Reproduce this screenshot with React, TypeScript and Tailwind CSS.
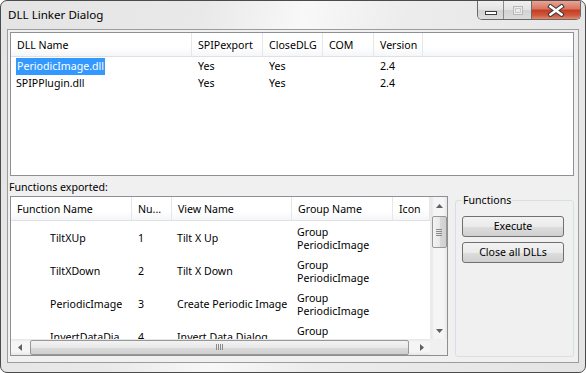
import React from "react";

const topCols = [
  { label: "DLL Name", w: 181 },
  { label: "SPIPexport", w: 71 },
  { label: "CloseDLG", w: 60 },
  { label: "COM", w: 51 },
  { label: "Version", w: 49 },
];

const topRows = [
  ["PeriodicImage.dll", "Yes", "Yes", "", "2.4"],
  ["SPIPPlugin.dll", "Yes", "Yes", "", "2.4"],
];

const lowCols = [
  { label: "Function Name", w: 121 },
  { label: "Nu...", w: 40 },
  { label: "View Name", w: 120 },
  { label: "Group Name", w: 101 },
  { label: "Icon", w: 37 },
];

const lowRows = [
  ["TiltXUp", "1", "Tilt X Up"],
  ["TiltXDown", "2", "Tilt X Down"],
  ["PeriodicImage", "3", "Create Periodic Image"],
  ["InvertDataDia", "4", "Invert Data Dialog"],
];

function Header({ cols }: { cols: { label: string; w: number }[] }) {
  return (
    <div className="flex h-[24px] shrink-0 border-b border-[#dfe0e3] bg-[linear-gradient(#ffffff,#ffffff_60%,#f5f6f8)]">
      {cols.map((c) => (
        <div
          key={c.label}
          style={{ width: c.w }}
          className="shrink-0 border-r border-[#e6e7e9] pl-[6px] pt-[2px] flex items-center whitespace-nowrap overflow-hidden"
        >
          {c.label}
        </div>
      ))}
      <div className="flex-1" />
    </div>
  );
}

function Arrow({ dir }: { dir: "up" | "down" | "left" | "right" }) {
  const pts =
    dir === "up"
      ? "0,4 3.5,0 7,4"
      : dir === "down"
      ? "0,0 3.5,4 7,0"
      : dir === "left"
      ? "4,0 0,3.5 4,7"
      : "0,0 4,3.5 0,7";
  const w = dir === "up" || dir === "down" ? 7 : 4;
  const h = dir === "up" || dir === "down" ? 4 : 7;
  return (
    <svg width={w} height={h} viewBox={`0 0 ${w} ${h}`}>
      <polygon points={pts} fill="#606060" />
    </svg>
  );
}

export default function App() {
  return (
    <div className="w-[586px] h-[373px] bg-white font-['Noto_Sans','Liberation_Sans',sans-serif] text-[10.6px] text-black leading-none">
      <div className="w-[586px] h-[373px] rounded-[7px] border border-[#4b4b4b] bg-[linear-gradient(105deg,#e4e4e4_0%,#e9e9e9_30%,#f8f8f8_45%,#ececec_60%,#e4e4e4_100%)] flex flex-col overflow-hidden">
        {/* title bar */}
        <div className="h-[28px] shrink-0 flex justify-between items-start">
          <div className="pl-[7px] pt-[8px] text-[11.6px] text-black">DLL Linker Dialog</div>
          <div className="flex mr-[4px] h-[19px] border border-t-0 border-[#6a6a6a] rounded-b-[5px] overflow-hidden">
            <div className="w-[26px] h-full border-r border-[#8a8a8a] bg-[linear-gradient(#f0f0f0,#e2e2e2_50%,#d2d2d2_51%,#dcdcdc)] flex items-center justify-center">
              <div className="mt-[6px] w-[12px] h-[4px] bg-white border border-[#3c3c3c]" />
            </div>
            <div className="w-[28px] h-full border-r border-[#6a6a6a] bg-[linear-gradient(#f0f0f0,#e2e2e2_50%,#d2d2d2_51%,#dcdcdc)] flex items-center justify-center">
              <div className="w-[10px] h-[9px] border border-[#b8b8b8] bg-[#ececec] flex items-start justify-center">
                <div className="mt-[1px] w-[6px] h-[5px] border border-[#c8c8c8]" />
              </div>
            </div>
            <div className="w-[48px] h-full bg-[linear-gradient(#e8a594,#d9735f_45%,#c43c22_50%,#cf5a3e_80%,#e18a6e)] flex items-center justify-center">
              <svg width="18" height="13" viewBox="0 0 18 13">
                <path d="M3.5 2.5 L14.5 10.5 M14.5 2.5 L3.5 10.5" stroke="#3a3a3a" strokeWidth="4.6" strokeLinecap="square" />
                <path d="M3.5 2.5 L14.5 10.5 M14.5 2.5 L3.5 10.5" stroke="#ffffff" strokeWidth="2.6" strokeLinecap="square" />
              </svg>
            </div>
          </div>
        </div>

        {/* client area */}
        <div className="mx-[6px] mb-[9px] flex-1 border border-[#9c9c9c] bg-[#f0f0f0] flex flex-col pl-[2px] pr-[4px] pt-[2px] pb-[5px]">
          {/* top list */}
          <div className="h-[144px] shrink-0 border border-[#8c9096] bg-white flex flex-col">
            <Header cols={topCols} />
            <div className="pt-[1px]">
              {topRows.map((r, i) => (
                <div key={i} className="flex h-[17px] items-center">
                  {r.map((cell, j) => (
                    <div
                      key={j}
                      style={{ width: topCols[j].w }}
                      className={`shrink-0 whitespace-nowrap ${j === 0 ? "pl-[5px]" : "pl-[6px]"}`}
                    >
                      {j === 0 && i === 0 ? (
                        <span className="inline-flex items-center h-[17px] px-[1px] bg-[#3399ff] text-white">{cell}</span>
                      ) : (
                        cell
                      )}
                    </div>
                  ))}
                </div>
              ))}
            </div>
          </div>

          {/* label */}
          <div className="h-[20px] shrink-0 flex items-center -ml-[1px] pt-[2px]">Functions exported:</div>

          {/* lower row */}
          <div className="flex-1 flex gap-[7px]">
            {/* lower list */}
            <div className="w-[438px] h-[160px] border border-[#8c9096] bg-white grid grid-cols-[1fr_17px] grid-rows-[1fr_16px]">
              <div className="flex flex-col overflow-hidden">
                <Header cols={lowCols} />
                <div className="pt-[1px] overflow-hidden flex-1">
                  {lowRows.map((r, i) => (
                    <div key={i} className="flex h-[33px] items-center">
                      <div style={{ width: 121 }} className="shrink-0 pl-[39px] whitespace-nowrap">{r[0]}</div>
                      <div style={{ width: 40 }} className="shrink-0 pl-[6px]">{r[1]}</div>
                      <div style={{ width: 120 }} className="shrink-0 pl-[5px] whitespace-nowrap">{r[2]}</div>
                      <div style={{ width: 101 }} className="shrink-0 pl-[5px] leading-[13px]">
                        <div>Group</div>
                        <div>PeriodicImage</div>
                      </div>
                    </div>
                  ))}
                </div>
              </div>
              {/* vertical scrollbar */}
              <div className="bg-[linear-gradient(90deg,#e6e6e6,#f5f5f5_20%,#f5f5f5_80%,#e6e6e6)] border-l border-[#ececec] flex flex-col items-center">
                <div className="h-[17px] w-full flex items-center justify-center">
                  <Arrow dir="up" />
                </div>
                <div className="mt-[2px] w-[15px] h-[32px] rounded-[2px] border border-[#979797] bg-[linear-gradient(90deg,#f3f3f3,#e8e8e8_50%,#d9d9d9_51%,#d0d0d0)] flex flex-col items-center justify-center gap-[1px]">
                  <div className="w-[6px] h-[1px] bg-[#8a8a8a]" />
                  <div className="w-[6px] h-[1px] bg-[#8a8a8a]" />
                  <div className="w-[6px] h-[1px] bg-[#8a8a8a]" />
                  <div className="w-[6px] h-[1px] bg-[#8a8a8a]" />
                </div>
                <div className="flex-1" />
                <div className="h-[17px] w-full flex items-center justify-center">
                  <Arrow dir="down" />
                </div>
              </div>
              {/* horizontal scrollbar */}
              <div className="bg-[linear-gradient(#e6e6e6,#f5f5f5_20%,#f5f5f5_80%,#e6e6e6)] flex items-center">
                <div className="w-[17px] h-full flex items-center justify-center">
                  <Arrow dir="left" />
                </div>
                <div className="ml-[2px] w-[379px] h-[15px] rounded-[2px] border border-[#979797] bg-[linear-gradient(#f3f3f3,#e8e8e8_50%,#d9d9d9_51%,#d0d0d0)] flex items-center justify-center gap-[1px]">
                  <div className="w-[1px] h-[6px] bg-[#8a8a8a]" />
                  <div className="w-[1px] h-[6px] bg-[#8a8a8a]" />
                  <div className="w-[1px] h-[6px] bg-[#8a8a8a]" />
                  <div className="w-[1px] h-[6px] bg-[#8a8a8a]" />
                </div>
                <div className="flex-1" />
                <div className="w-[17px] h-full flex items-center justify-center">
                  <Arrow dir="right" />
                </div>
              </div>
              <div className="bg-[#f0f0f0]" />
            </div>

            {/* group box */}
            <div className="relative mt-[4px] w-[119px] h-[157px] border border-[#d5dfe5] rounded-[3px] pl-[6px] pt-[15px] flex flex-col gap-[5px]">
              <div className="absolute -top-[7px] left-[6px] px-[1px] bg-[#f0f0f0] leading-[13px]">Functions</div>
              <div className="w-[102px] h-[21px] rounded-[3px] border border-[#707070] bg-[linear-gradient(#f2f2f2,#ebebeb_50%,#dddddd_51%,#cfcfcf)] flex items-center justify-center">
                Execute
              </div>
              <div className="w-[102px] h-[21px] rounded-[3px] border border-[#707070] bg-[linear-gradient(#f2f2f2,#ebebeb_50%,#dddddd_51%,#cfcfcf)] flex items-center justify-center">
                Close all DLLs
              </div>
            </div>
          </div>
        </div>
      </div>
    </div>
  );
}
